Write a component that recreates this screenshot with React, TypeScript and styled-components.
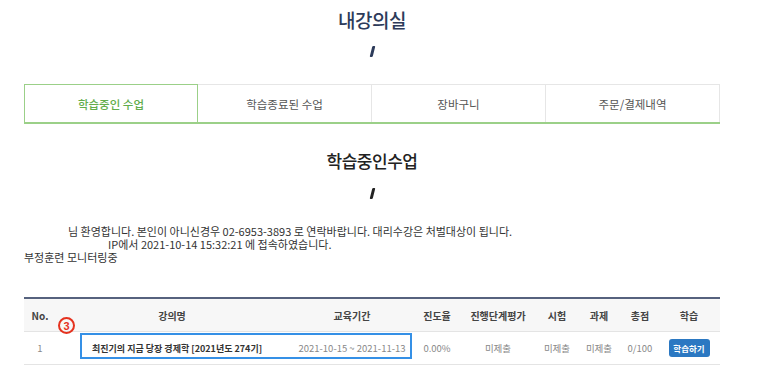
import React from "react";
import styled, { createGlobalStyle } from "styled-components";

const Global = createGlobalStyle`
  html, body { margin: 0; padding: 0; background: #fff; }
  body { font-family: "Noto Sans CJK KR", "Noto Sans", sans-serif; color: #333; }
`;

const Page = styled.div`
  width: 696px;
  margin-left: 24px;
  padding-top: 8px;
  display: flex;
  flex-direction: column;
`;

const Title = styled.h1`
  margin: 0;
  text-align: center;
  font-size: 19px;
  line-height: 24px;
  font-weight: 500;
  color: #2d3b5a;
  letter-spacing: -0.5px;
`;

const Slash = styled.div<{ $mt: number; $color: string }>`
  align-self: center;
  width: 3px;
  height: 11px;
  margin-top: ${(p) => p.$mt}px;
  background: ${(p) => p.$color};
  transform: skewX(-14deg);
  border-radius: 1px;
`;

const Tabs = styled.div`
  margin-top: 27px;
  display: grid;
  grid-template-columns: repeat(4, 1fr);
  border-bottom: 2px solid #9bd088;
`;

const Tab = styled.div<{ $active?: boolean }>`
  height: 37px;
  display: flex;
  align-items: center;
  justify-content: center;
  font-size: 11.5px;
  color: ${(p) => (p.$active ? "#62ad4c" : "#555")};
  font-weight: ${(p) => (p.$active ? 500 : 400)};
  border: 1px solid ${(p) => (p.$active ? "#9bd088" : "#e6e6e6")};
  border-bottom: none;
  border-left-width: ${(p) => (p.$active ? 1 : 0)}px;
  &:first-child { border-left-width: 1px; }
`;

const Heading = styled.h2`
  margin: 26px 0 0;
  text-align: center;
  font-size: 17px;
  line-height: 22px;
  font-weight: 500;
  color: #222;
  letter-spacing: -0.5px;
`;

const Info = styled.div`
  margin-top: 26px;
  font-size: 11px;
  line-height: 13px;
  color: #333;
`;

const InfoLine = styled.div<{ $indent: number }>`
  padding-left: ${(p) => p.$indent}px;
  white-space: nowrap;
  height: 13px;
`;

const TableWrap = styled.div`
  position: relative;
  margin-top: 33px;
`;

const Table = styled.table`
  width: 696px;
  border-collapse: collapse;
  table-layout: fixed;
  border-top: 2px solid #56627e;
`;

const Th = styled.th`
  height: 32px;
  padding: 0;
  background: #f7f7f7;
  border-bottom: 1px solid #e4e4e4;
  font-size: 10px;
  font-weight: 600;
  color: #444;
  text-align: center;
  white-space: nowrap;
`;

const Td = styled.td<{ $align?: string; $pl?: number; $bold?: boolean }>`
  height: 32px;
  padding: 0 0 0 ${(p) => p.$pl ?? 0}px;
  border-bottom: 1px solid #e4e4e4;
  font-size: ${(p) => (p.$bold ? 9 : 9.5)}px;
  color: ${(p) => (p.$bold ? "#333" : "#888")};
  font-weight: ${(p) => (p.$bold ? 600 : 400)};
  text-align: ${(p) => p.$align ?? "center"};
  white-space: nowrap;
  overflow: visible;
`;

const StudyButton = styled.button`
  width: 41px;
  height: 18px;
  border: none;
  border-radius: 3px;
  background: #2b78c2;
  color: #fff;
  font-family: inherit;
  font-size: 8.5px;
  font-weight: 700;
  padding: 0;
`;

const Highlight = styled.div`
  position: absolute;
  left: 56px;
  top: 36px;
  width: 332px;
  height: 26px;
  box-sizing: border-box;
  border: 2px solid #3590e6;
  pointer-events: none;
`;

const Marker = styled.div`
  position: absolute;
  left: 34px;
  top: 20px;
  width: 17px;
  height: 17px;
  box-sizing: border-box;
  border: 2px solid #e5321f;
  border-radius: 50%;
  color: #e5321f;
  font-family: "Liberation Sans", sans-serif;
  font-weight: 700;
  font-size: 11px;
  display: flex;
  align-items: center;
  justify-content: center;
`;

const cols = [32, 232, 128, 42, 80, 38, 46, 36, 62];
const headers = ["No.", "강의명", "교육기간", "진도율", "진행단계평가", "시험", "과제", "총점", "학습"];

export default function App() {
  return (
    <>
      <Global />
      <Page>
        <Title>내강의실</Title>
        <Slash $mt={14} $color="#2d3b5a" />
        <Tabs>
          <Tab $active>학습중인 수업</Tab>
          <Tab>학습종료된 수업</Tab>
          <Tab>장바구니</Tab>
          <Tab>주문/결제내역</Tab>
        </Tabs>
        <Heading>학습중인수업</Heading>
        <Slash $mt={16} $color="#222" />
        <Info>
          <InfoLine $indent={44}>
            님 환영합니다. 본인이 아니신경우 02-6953-3893 로 연락바랍니다. 대리수강은 처벌대상이 됩니다.
          </InfoLine>
          <InfoLine $indent={84}>IP에서 2021-10-14 15:32:21 에 접속하였습니다.</InfoLine>
          <InfoLine $indent={0}>부정훈련 모니터링중</InfoLine>
        </Info>
        <TableWrap>
          <Table>
            <colgroup>
              {cols.map((w, i) => (
                <col key={i} style={{ width: w }} />
              ))}
            </colgroup>
            <thead>
              <tr>
                {headers.map((h) => (
                  <Th key={h}>{h}</Th>
                ))}
              </tr>
            </thead>
            <tbody>
              <tr>
                <Td>1</Td>
                <Td $align="left" $pl={36} $bold>
                  최진기의 지금 당장 경제학 [2021년도 274기]
                </Td>
                <Td>2021-10-15 ~ 2021-11-13</Td>
                <Td>0.00%</Td>
                <Td>미제출</Td>
                <Td>미제출</Td>
                <Td>미제출</Td>
                <Td>0/100</Td>
                <Td>
                  <StudyButton>학습하기</StudyButton>
                </Td>
              </tr>
            </tbody>
          </Table>
          <Highlight />
          <Marker>3</Marker>
        </TableWrap>
      </Page>
    </>
  );
}
